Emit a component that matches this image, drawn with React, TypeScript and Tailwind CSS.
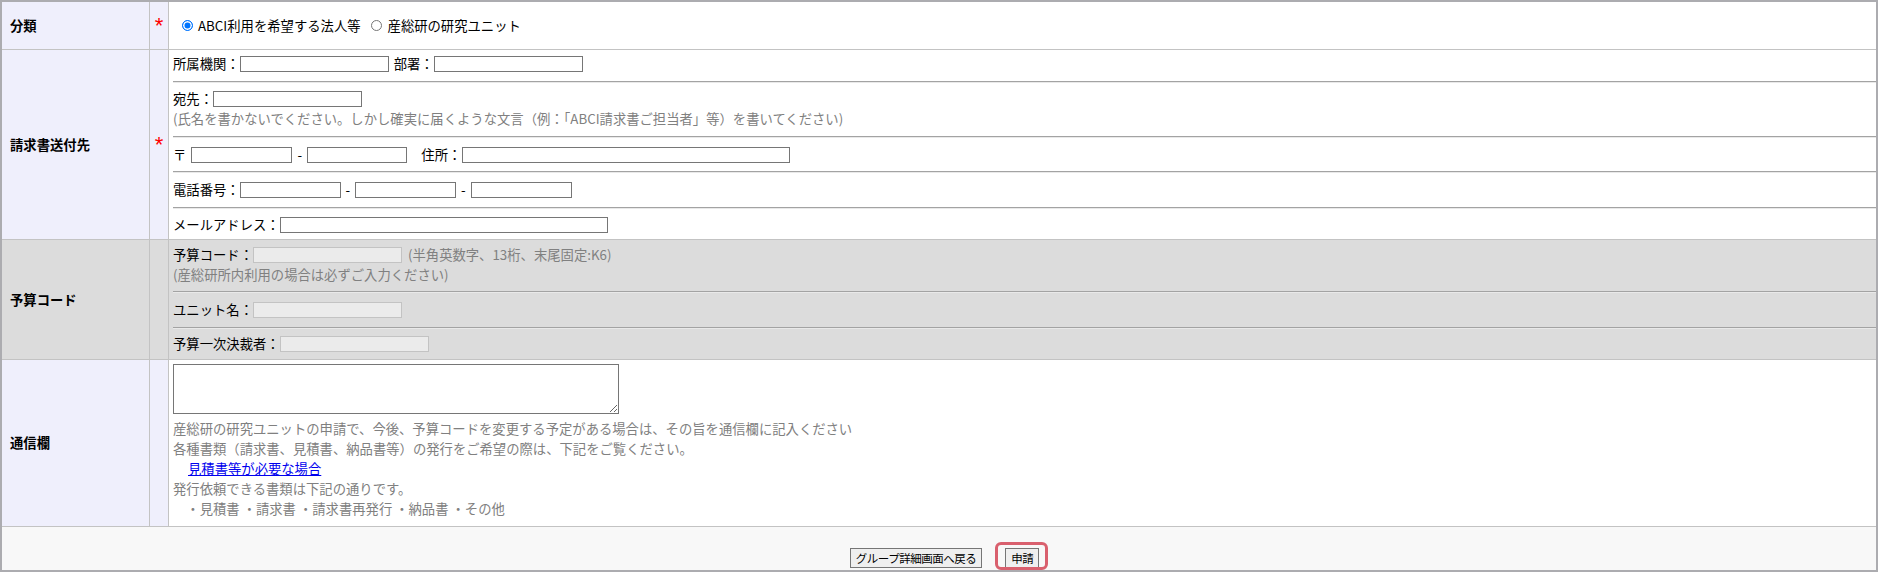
import React from "react";

const Sep = () => (
  <div className="h-0 border-t border-t-[#a3a3a3] border-b border-b-[#e9e9e9]" />
);

function Field({
  w,
  disabled,
  className = "",
}: {
  w: string;
  disabled?: boolean;
  className?: string;
}) {
  return (
    <input
      type="text"
      disabled={disabled}
      className={`${w} h-[16px] box-border border ${
        disabled ? "border-[#c3c3c3] bg-[#ebebeb]" : "border-[#767676] bg-white"
      } ${className}`}
    />
  );
}

const Star = () => (
  <span className="text-[22px] leading-[20px] text-[#ff0000] font-['Liberation_Sans',sans-serif]">
    *
  </span>
);

const Dash = ({ w }: { w: string }) => <span className={`${w} text-center`}>-</span>;

export default function App() {
  return (
    <div className="w-[1878px] h-[572px] box-border border-2 border-[#acacb0] bg-white flex flex-col font-['Noto_Sans_CJK_JP',sans-serif] text-[13.333px] leading-[20px] text-black">
      {/* 分類 */}
      <div className="grid grid-cols-[148px_19px_1fr] h-[48px] border-b border-[#c3c3c3]">
        <div className="bg-[#efeffc] border-r border-[#c3c3c3] flex items-center pl-[8px] font-bold">
          分類
        </div>
        <div className="bg-[#efeffc] border-r border-[#c3c3c3] flex items-center justify-center">
          <Star />
        </div>
        <div className="flex items-center pl-[4px]">
          <input
            type="radio"
            name="kind"
            defaultChecked
            className="appearance-none m-0 ml-[9px] w-[11px] h-[11px] rounded-full border border-[#767676] bg-white checked:border-[1.5px] checked:border-[#0075ff] checked:bg-[#0075ff] checked:shadow-[inset_0_0_0_1.5px_white]"
          />
          <span className="ml-[5px]">ABCI利用を希望する法人等</span>
          <input
            type="radio"
            name="kind"
            className="appearance-none m-0 ml-[10px] w-[11px] h-[11px] rounded-full border border-[#767676] bg-white checked:border-[1.5px] checked:border-[#0075ff] checked:bg-[#0075ff] checked:shadow-[inset_0_0_0_1.5px_white]"
          />
          <span className="ml-[6px]">産総研の研究ユニット</span>
        </div>
      </div>

      {/* 請求書送付先 */}
      <div className="grid grid-cols-[148px_19px_1fr] h-[190px] border-b border-[#c3c3c3]">
        <div className="bg-[#efeffc] border-r border-[#c3c3c3] flex items-center pl-[8px] font-bold">
          請求書送付先
        </div>
        <div className="bg-[#efeffc] border-r border-[#c3c3c3] flex items-center justify-center">
          <Star />
        </div>
        <div className="flex flex-col pl-[4px]">
          <div className="pt-[4px] pb-[7px]">
            <div className="flex items-center h-[20px]">
              <span>所属機関：</span>
              <Field w="w-[149px]" />
              <span className="ml-[5px]">部署：</span>
              <Field w="w-[149px]" />
            </div>
          </div>
          <Sep />
          <div className="pt-[6px] pb-[8px]">
            <div className="flex items-center h-[20px]">
              <span>宛先：</span>
              <Field w="w-[149px]" />
            </div>
            <div className="h-[19px] leading-[19px] text-[#808080]">
              (氏名を書かないでください。しかし確実に届くような文言（例：「ABCI請求書ご担当者」等）を書いてください)
            </div>
          </div>
          <Sep />
          <div className="pt-[7px] pb-[6px]">
            <div className="flex items-center h-[20px]">
              <span>〒</span>
              <Field w="w-[101px]" className="ml-[5px]" />
              <Dash w="w-[15px]" />
              <Field w="w-[100px]" />
              <span className="ml-[14px]">住所：</span>
              <Field w="w-[328px]" className="ml-[1px]" />
            </div>
          </div>
          <Sep />
          <div className="pt-[7px] pb-[7px]">
            <div className="flex items-center h-[20px]">
              <span>電話番号：</span>
              <Field w="w-[101px]" />
              <Dash w="w-[14.5px]" />
              <Field w="w-[101px]" />
              <Dash w="w-[14.5px]" />
              <Field w="w-[101px]" />
            </div>
          </div>
          <Sep />
          <div className="pt-[6px] pb-[4px]">
            <div className="flex items-center h-[20px]">
              <span>メールアドレス：</span>
              <Field w="w-[328px]" />
            </div>
          </div>
        </div>
      </div>

      {/* 予算コード */}
      <div className="grid grid-cols-[148px_19px_1fr] h-[120px] border-b border-[#c3c3c3] bg-[#dcdcdc]">
        <div className="border-r border-[#c3c3c3] flex items-center pl-[8px] font-bold">予算コード</div>
        <div className="border-r border-[#c3c3c3]" />
        <div className="flex flex-col pl-[4px]">
          <div className="pt-[5px] pb-[7px]">
            <div className="flex items-center h-[20px]">
              <span>予算コード：</span>
              <Field w="w-[149px]" disabled />
              <span className="ml-[6px] text-[#808080]">(半角英数字、13桁、末尾固定:K6)</span>
            </div>
            <div className="h-[19px] leading-[19px] text-[#808080]">
              (産総研所内利用の場合は必ずご入力ください)
            </div>
          </div>
          <Sep />
          <div className="pt-[7px] pb-[7px]">
            <div className="flex items-center h-[20px]">
              <span>ユニット名：</span>
              <Field w="w-[149px]" disabled />
            </div>
          </div>
          <Sep />
          <div className="pt-[5px] pb-[5px]">
            <div className="flex items-center h-[20px]">
              <span>予算一次決裁者：</span>
              <Field w="w-[149px]" disabled />
            </div>
          </div>
        </div>
      </div>

      {/* 通信欄 */}
      <div className="grid grid-cols-[148px_19px_1fr] h-[167px] border-b border-[#c3c3c3]">
        <div className="bg-[#efeffc] border-r border-[#c3c3c3] flex items-center pl-[8px] font-bold">
          通信欄
        </div>
        <div className="bg-[#efeffc] border-r border-[#c3c3c3]" />
        <div className="flex flex-col pl-[4px] pt-[4px]">
          <textarea className="block w-[446px] h-[50px] box-border border border-[#767676] bg-white" />
          <div className="mt-[5px] text-[#808080]">
            <div>産総研の研究ユニットの申請で、今後、予算コードを変更する予定がある場合は、その旨を通信欄に記入ください</div>
            <div>各種書類（請求書、見積書、納品書等）の発行をご希望の際は、下記をご覧ください。</div>
            <div className="pl-[15px]">
              <a href="#" className="text-[#0000ee] underline">
                見積書等が必要な場合
              </a>
            </div>
            <div>発行依頼できる書類は下記の通りです。</div>
            <div className="whitespace-pre">{"　・見積書 ・請求書 ・請求書再発行 ・納品書 ・その他"}</div>
          </div>
        </div>
      </div>

      {/* footer */}
      <div className="flex-1 bg-[#f8f8f8] flex justify-center items-start pl-[11px] pt-[21px] gap-[23px]">
        <button className="h-[20px] px-[5px] box-border border border-[#767676] bg-[#efefef] text-[11.5px] tracking-[-0.5px] leading-[18px] text-black whitespace-nowrap">
          グループ詳細画面へ戻る
        </button>
        <span className="relative">
          <button className="h-[20px] px-[5px] box-border border border-[#767676] bg-[#efefef] text-[11.5px] tracking-[-0.5px] leading-[18px] text-black whitespace-nowrap">
            申請
          </button>
          <span className="absolute left-[-10px] right-[-9px] top-[-6px] bottom-[-2px] border-[3px] border-[#d9606e] rounded-[6px] pointer-events-none" />
        </span>
      </div>
    </div>
  );
}
